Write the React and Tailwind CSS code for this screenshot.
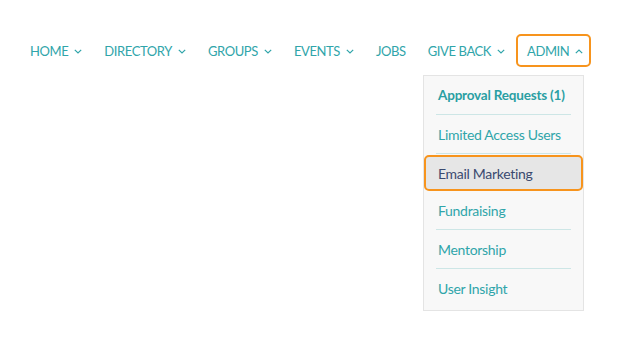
import React from "react";

function Chevron({ up }) {
  return (
    <svg width="8" height="5" viewBox="0 0 8 5" className="shrink-0 mt-[2px]">
      <path
        d={up ? "M0.8 4.2 L4 1 L7.2 4.2" : "M0.8 0.8 L4 4 L7.2 0.8"}
        fill="none"
        stroke="currentColor"
        strokeWidth="1.2"
      />
    </svg>
  );
}

function NavItem({ label, caret, active }) {
  return (
    <div
      className={
        "flex items-center gap-[6px] h-[33px] px-[11px] " +
        (active ? "border-2 border-[#f7941d] rounded-[5px] pl-[9px] pr-[6px]" : "")
      }
    >
      <span className="pt-[3px]">{label}</span>
      {caret === "down" ? <Chevron /> : null}
      {caret === "up" ? <Chevron up /> : null}
    </div>
  );
}

function MenuItem({ label, bold, last }) {
  return (
    <div
      className={
        "mx-[12px] h-[39px] flex items-center pl-[2px] whitespace-nowrap " +
        (last ? "" : "border-b border-[#cde6e6] ") +
        (bold ? "font-bold text-[13.5px] tracking-[-0.2px] text-[#2a9fa3]" : "tracking-[-0.3px]")
      }
    >
      {label}
    </div>
  );
}

export default function App() {
  return (
    <div
      className="relative w-[640px] h-[339px] bg-white overflow-hidden text-[#30a5aa]"
      style={{ fontFamily: "Lato, 'Noto Sans', sans-serif" }}
    >
      {/* top navigation */}
      <div className="flex items-center pt-[34px] pl-[19px] text-[13px] tracking-[-0.4px]">
        <NavItem label="HOME" caret="down" />
        <NavItem label="DIRECTORY" caret="down" />
        <NavItem label="GROUPS" caret="down" />
        <NavItem label="EVENTS" caret="down" />
        <NavItem label="JOBS" />
        <NavItem label="GIVE BACK" caret="down" />
        <NavItem label="ADMIN" caret="up" active />
      </div>

      {/* admin dropdown */}
      <div className="absolute left-[423px] top-[75px] w-[161px] h-[236px] bg-[#f8f8f8] border border-[#e4e4e4] text-[14px]">
        <MenuItem label="Approval Requests (1)" bold />
        <MenuItem label="Limited Access Users" />
        <div className="mt-[1px] h-[36px] flex items-center px-[12px] bg-[#e6e6e6] border-2 border-[#f7941d] rounded-[5px] text-[#3a4a70] tracking-[-0.3px]">
          Email Marketing
        </div>
        <MenuItem label="Fundraising" />
        <MenuItem label="Mentorship" />
        <MenuItem label="User Insight" last />
      </div>
    </div>
  );
}
